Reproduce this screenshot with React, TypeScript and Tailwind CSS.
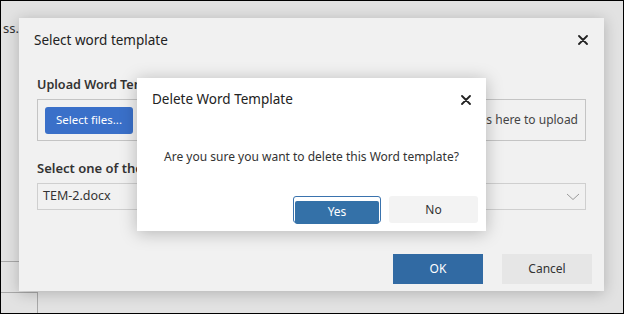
import React from "react";

const font = { fontFamily: '"Noto Sans", "Liberation Sans", sans-serif' };

const CloseIcon = () => (
  <svg width="10" height="10" viewBox="0 0 10 10" className="text-[#222]">
    <path d="M1 1L9 9M9 1L1 9" stroke="currentColor" strokeWidth="1.8" strokeLinecap="round" />
  </svg>
);

const Chevron = () => (
  <svg width="14" height="8" viewBox="0 0 14 8">
    <path d="M1 1L7 6.5L13 1" stroke="#9a9a9a" strokeWidth="1" fill="none" />
  </svg>
);

const App = () => {
  return (
    <div className="w-[624px] h-[314px] border border-black bg-[#e2e2e2] relative overflow-hidden text-[#2b2b2b]" style={font}>
      {/* page behind the overlay */}
      <div className="flex flex-col h-full">
        <div className="pt-[17px] pl-[2px] text-[13px] leading-[20px] text-[#333]">ss.</div>
        <div className="flex-1" />
        <div className="w-[18px] h-[31px] border-t border-[#a8a8a8]" />
        <div className="w-[37px] h-[21px] border-t border-r border-[#a8a8a8]" />
      </div>

      {/* outer dialog */}
      <div className="absolute left-[18px] top-[17px] w-[585px] h-[273px] bg-[#f1f1f1] shadow-[0_2px_14px_rgba(0,0,0,0.22)] flex flex-col">
        <div className="h-[43px] flex items-center justify-between pl-[15px] pr-[16px] pt-[1px]">
          <span className="text-[13.5px] text-[#222]">Select word template</span>
          <CloseIcon />
        </div>
        <div className="flex flex-col px-[18px] pt-[14px]">
          <div className="h-[20px] leading-[20px] text-[12.6px] font-semibold text-[#333] mb-[4px] whitespace-nowrap">Upload Word Template</div>
          <div className="h-[42px] border border-[#c4c4c4] p-[7px] flex items-center justify-between">
            <button className="h-[27px] w-[88px] rounded-[3px] bg-[#3a70c9] text-white text-[11.5px]">Select files...</button>
            <span className="text-[12px] text-[#444] pr-[0px]">Drop files here to upload</span>
          </div>
          <div className="h-[20px] leading-[20px] text-[13px] font-semibold text-[#333] mt-[17px] mb-[5px] whitespace-nowrap">Select one of the existing templates</div>
          <div className="h-[27px] border border-[#cfcfcf] flex items-center justify-between pl-[5px] pr-[5px] bg-[#f1f1f1]">
            <span className="text-[12.5px] text-[#333]">TEM-2.docx</span>
            <Chevron />
          </div>
        </div>
        <div className="flex-1" />
        <div className="flex justify-end gap-[19px] pr-[12px] pb-[7px]">
          <button className="h-[30px] w-[90px] bg-[#316aa3] text-white text-[12px]">OK</button>
          <button className="h-[30px] w-[90px] bg-[#e6e6e6] text-[#333] text-[12px]">Cancel</button>
        </div>
      </div>

      {/* confirm dialog */}
      <div className="absolute left-[136px] top-[77px] w-[349px] h-[153px] bg-white shadow-[0_2px_16px_rgba(0,0,0,0.25)] flex flex-col">
        <div className="h-[43px] flex items-center justify-between pl-[15px] pr-[15px]">
          <span className="text-[13.5px] text-[#222]">Delete Word Template</span>
          <CloseIcon />
        </div>
        <div className="flex-1 flex items-center justify-center pb-[4px] text-[12px] text-[#333]">
          Are you sure you want to delete this Word template?
        </div>
        <div className="flex justify-end gap-[8px] pr-[8px] pb-[8px]">
          <div className="h-[27px] w-[88px] rounded-[3px] border border-[#3a73ae] p-[1px] bg-white">
            <button className="h-full w-full rounded-[2px] bg-[#3471a8] text-white text-[12px]">Yes</button>
          </div>
          <button className="h-[27px] w-[89px] rounded-[3px] bg-[#f3f3f3] text-[#333] text-[12px]">No</button>
        </div>
      </div>
    </div>
  );
};

export default App;
